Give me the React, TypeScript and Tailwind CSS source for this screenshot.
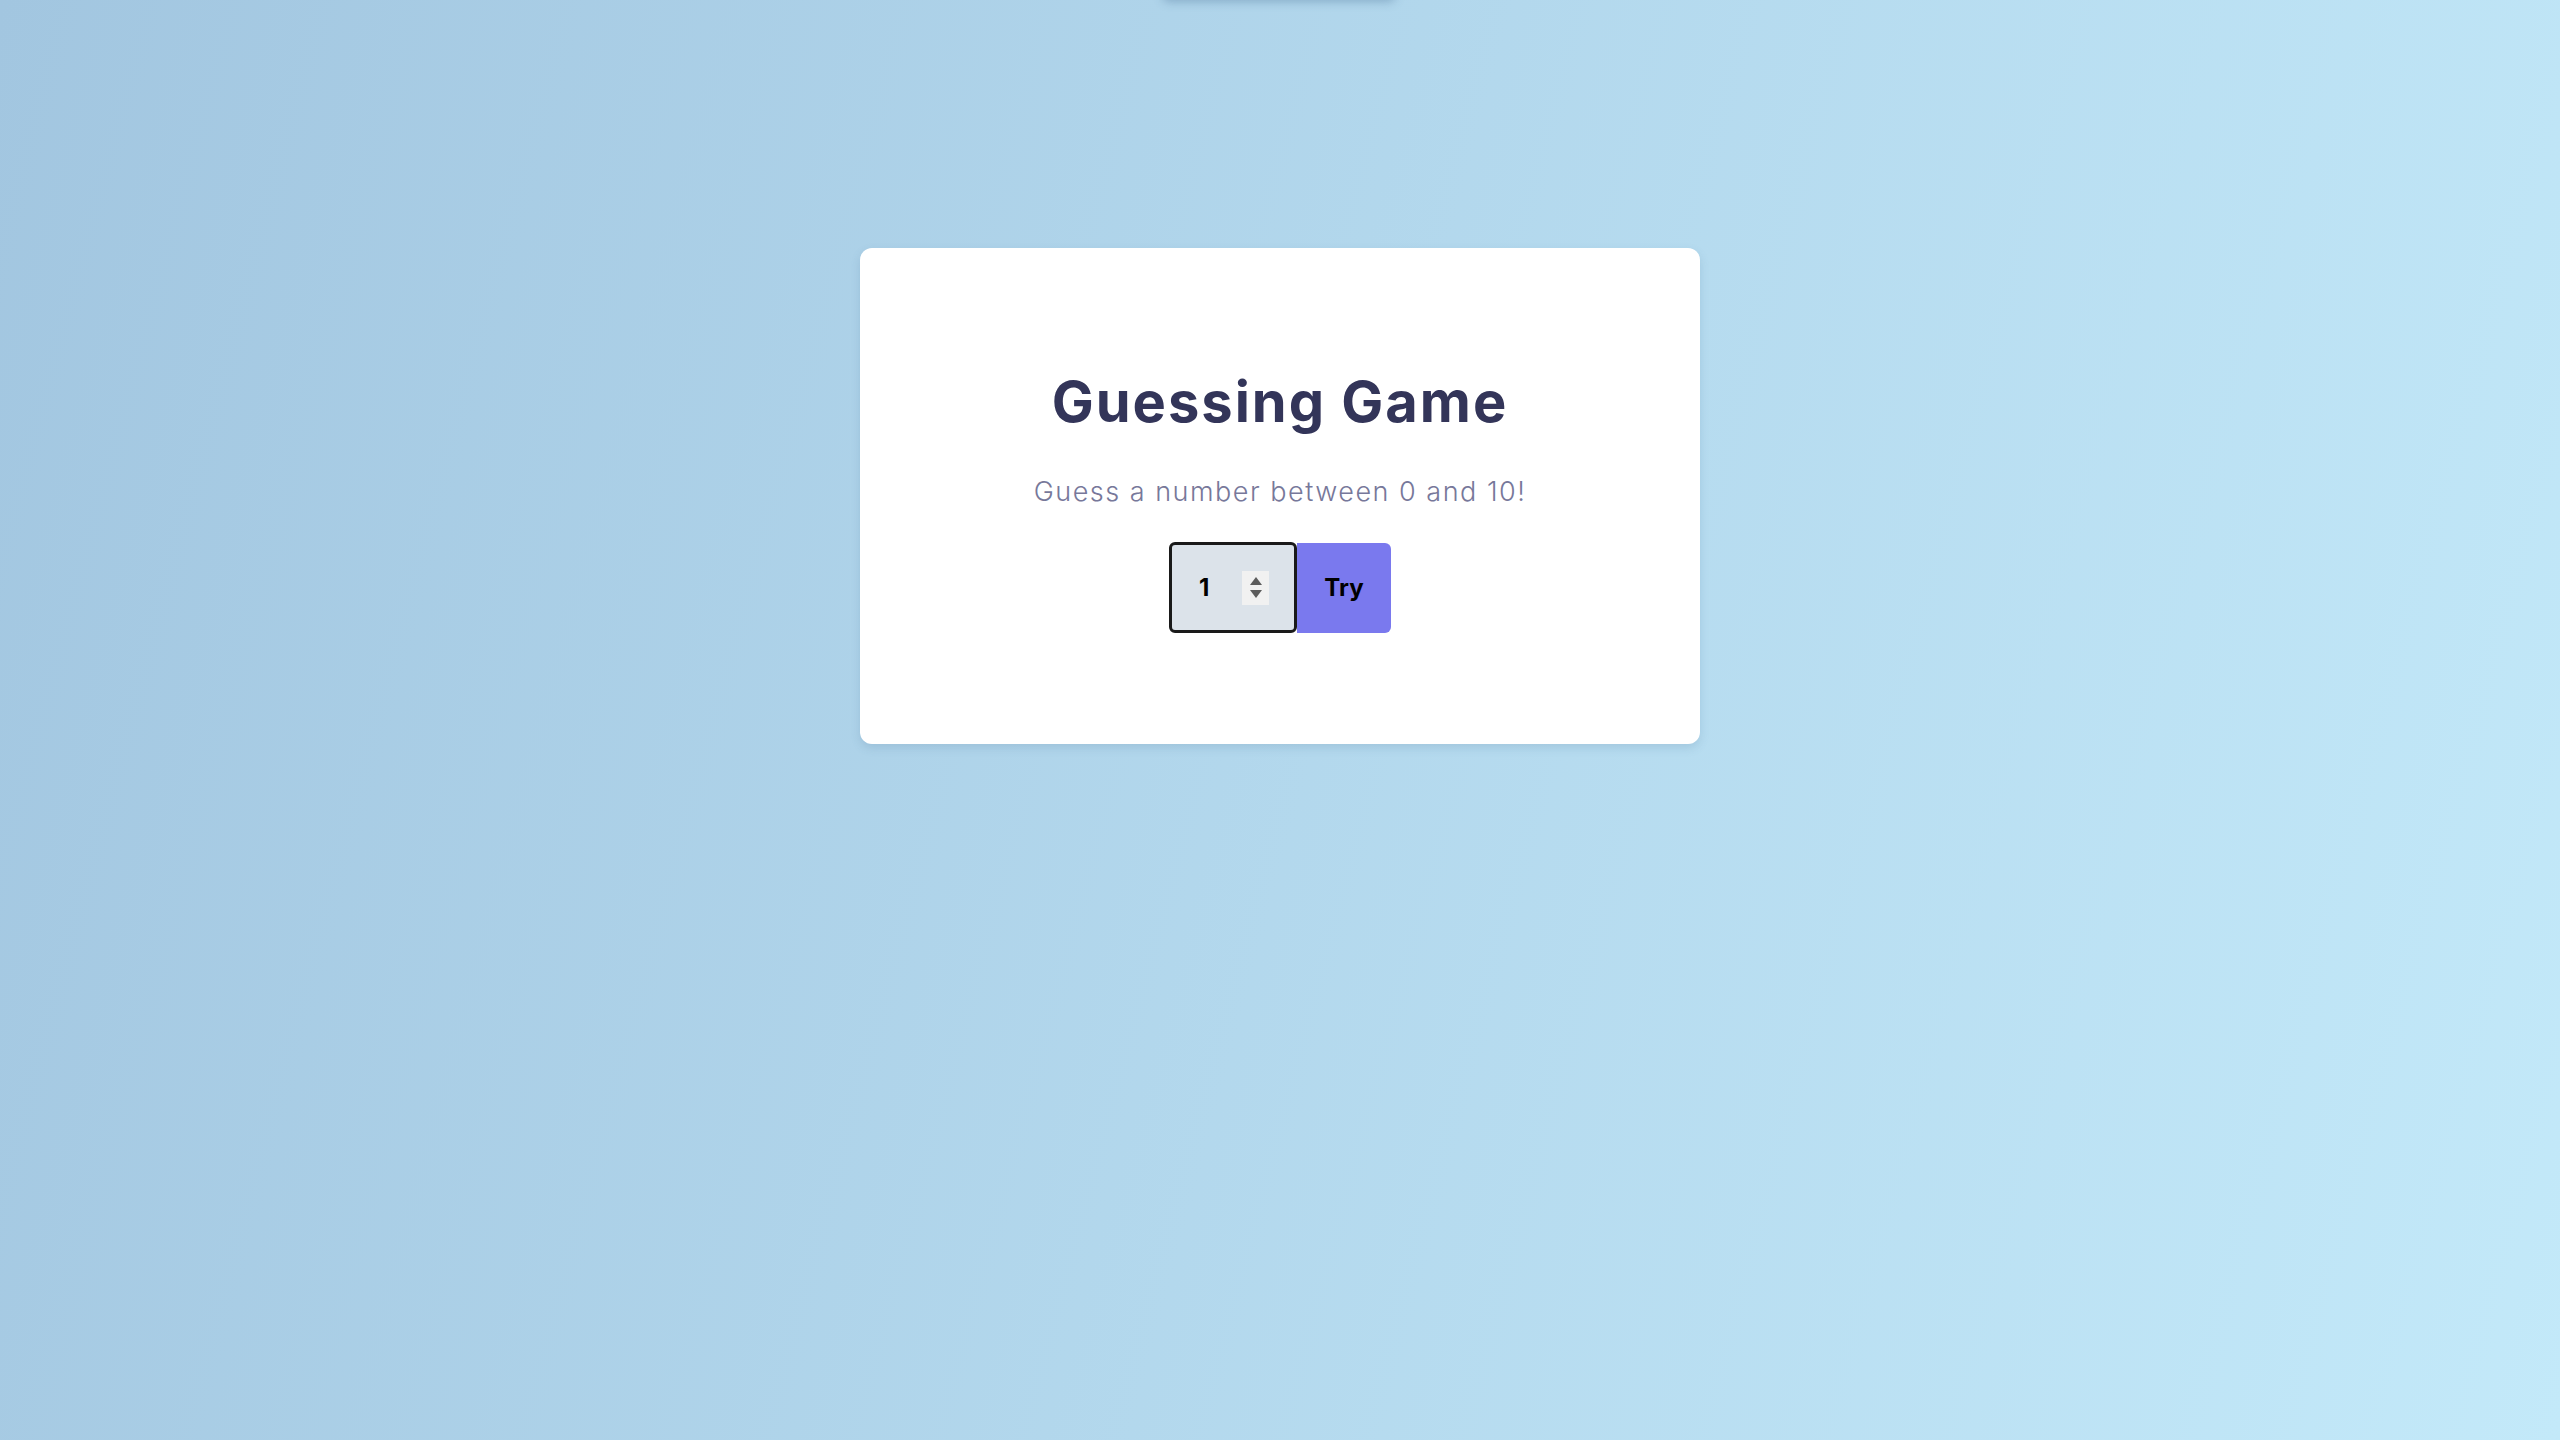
import React from "react";

export default function App() {
  return (
    <div
      className="relative min-h-[1440px] w-full overflow-hidden bg-linear-[105deg] from-[#a2c6e0] to-[#c3e9f9]"
      style={{ fontFamily: "Inter, 'Noto Sans', sans-serif" }}
    >
      <div className="absolute left-[1162px] top-[-60px] h-[60px] w-[234px] rounded-lg bg-[#aecfe6] shadow-[0_2px_10px_rgba(60,100,140,0.35)]" />
      <div className="mx-auto mt-[248px] flex h-[496px] w-[840px] flex-col items-center rounded-xl bg-white pt-[122px] shadow-[0_4px_10px_rgba(70,110,150,0.18)]">
        <h1 className="text-[56px] font-bold leading-[64px] tracking-[2px] text-[#333559]">
          Guessing Game
        </h1>
        <p className="mt-[40px] text-[27px] font-light leading-[36px] tracking-[1.5px] text-[#77789a]">
          Guess a number between 0 and 10!
        </p>
        <div className="mt-[32px] flex items-stretch">
          <div className="flex h-[91px] w-[128px] items-center rounded-md border-[3px] border-[#1a1a1a] bg-[#dce3ea] pl-[27px]">
            <span className="w-[43px] text-[24px] font-bold leading-none text-black">1</span>
            <div className="flex h-[34px] w-[27px] flex-col items-center justify-center gap-[5px] bg-[#f1f1f1]">
              <svg width="12" height="8" viewBox="0 0 12 8">
                <polygon points="6,0 12,8 0,8" fill="#5c5c5c" />
              </svg>
              <svg width="12" height="8" viewBox="0 0 12 8">
                <polygon points="0,0 12,0 6,8" fill="#5c5c5c" />
              </svg>
            </div>
          </div>
          <button className="mt-[1px] flex h-[90px] w-[94px] items-center justify-center rounded-r-md bg-[#7a79ee] text-[24px] font-bold text-black">
            Try
          </button>
        </div>
      </div>
    </div>
  );
}
